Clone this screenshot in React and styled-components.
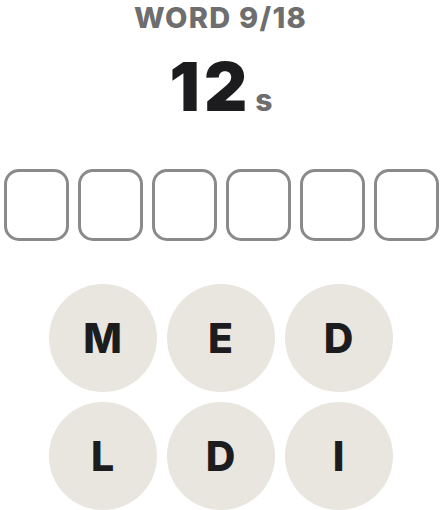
import React from 'react';
import styled, { createGlobalStyle } from 'styled-components';

const GlobalStyle = createGlobalStyle`
	html, body {
		margin: 0;
		padding: 0;
		background: #ffffff;
	}
	body {
		font-family: Inter, "Noto Sans", sans-serif;
	}
`;

const Page = styled.div`
	width: 440px;
	height: 510px;
	display: flex;
	flex-direction: column;
	align-items: center;
	overflow: hidden;
`;

const Counter = styled.div`
	height: 35px;
	line-height: 35px;
	font-size: 29px;
	font-weight: 800;
	color: #6e6e6e;
	letter-spacing: 1.3px;
	padding-left: 1px;
`;

const Timer = styled.div`
	margin-top: 19px;
	display: flex;
	align-items: baseline;
	height: 66px;
	line-height: 66px;
	padding-left: 2px;
`;

const Seconds = styled.span`
	font-size: 67px;
	font-weight: 900;
	color: #1c1c1e;
	letter-spacing: 4px;
`;

const Unit = styled.span`
	margin-left: 4px;
	font-size: 30px;
	font-weight: 800;
	color: #6e6e6e;
`;

const Slots = styled.div`
	margin-top: 49px;
	display: flex;
	gap: 9px;
	padding-left: 2px;
`;

const Slot = styled.div`
	box-sizing: border-box;
	width: 65px;
	height: 72px;
	border: 3px solid #8a8a8a;
	border-radius: 15px;
	background: #ffffff;
`;

const Board = styled.div`
	margin-top: 43px;
	display: grid;
	grid-template-columns: repeat(3, 108px);
	gap: 10px;
	padding-left: 1px;
`;

const Tile = styled.button`
	width: 108px;
	height: 108px;
	border-radius: 50%;
	border: none;
	padding: 0;
	background: #e8e6df;
	color: #1c1c1e;
	font-family: Inter, "Noto Sans", sans-serif;
	font-size: 41px;
	font-weight: 800;
	display: flex;
	align-items: center;
	justify-content: center;
	cursor: pointer;
`;

const letters = [ 'M', 'E', 'D', 'L', 'D', 'I' ];

export default function App() {
	return (
		<>
			<GlobalStyle />
			<Page>
				<Counter>WORD 9/18</Counter>
				<Timer>
					<Seconds>12</Seconds>
					<Unit>s</Unit>
				</Timer>
				<Slots>
					{ letters.map( ( _, idx ) => (
						<Slot key={ idx } />
					) ) }
				</Slots>
				<Board>
					{ letters.map( ( letter, idx ) => (
						<Tile key={ idx }>{ letter }</Tile>
					) ) }
				</Board>
			</Page>
		</>
	);
}
